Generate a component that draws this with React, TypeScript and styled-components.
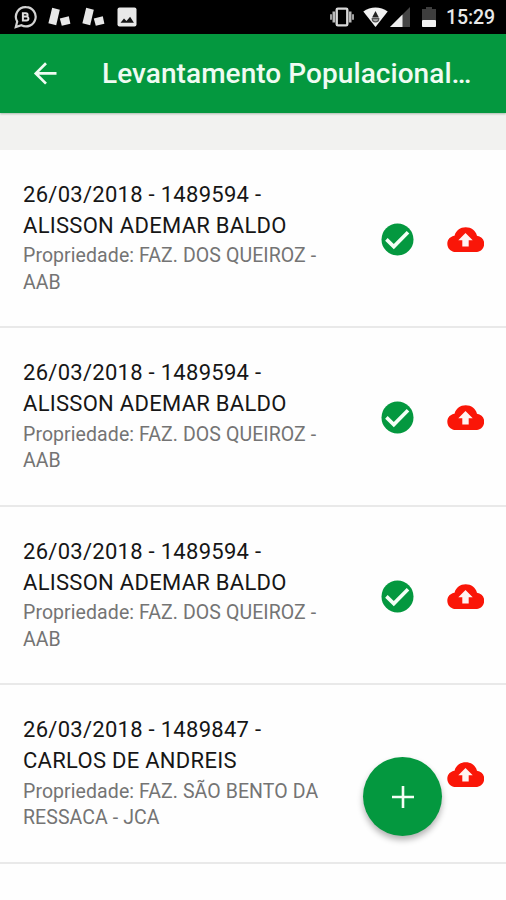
import React from "react";
import styled, { createGlobalStyle } from "styled-components";

const GlobalStyle = createGlobalStyle`
  * { box-sizing: border-box; }
  body { margin: 0; background: #fff; font-family: Roboto, "Liberation Sans", sans-serif; }
`;

const Screen = styled.div`
  position: relative;
  width: 506px;
  height: 900px;
  overflow: hidden;
  background: #fefefe;
  display: flex;
  flex-direction: column;
`;

const StatusBar = styled.div`
  flex: none;
  height: 34px;
  padding: 0 10px 0 14px;
  background: #000;
  display: flex;
  align-items: center;
  justify-content: space-between;
`;

const StatusGroup = styled.div`
  display: flex;
  align-items: center;
  height: 34px;
`;

const StatusIcon = styled.svg<{ $gap?: number }>`
  flex: none;
  display: block;
  margin-right: ${(p) => p.$gap ?? 0}px;
`;

const Clock = styled.span`
  width: 50px;
  color: #e9e9e9;
  font-size: 19.5px;
  line-height: 34px;
  font-weight: 500;
  letter-spacing: -0.1px;
  white-space: nowrap;
  padding-top: 2px;
`;

const AppBar = styled.header`
  flex: none;
  z-index: 1;
  height: 78.5px;
  background: #04983f;
  box-shadow: 0 1px 2px rgba(0, 60, 20, 0.3);
  display: flex;
  align-items: center;
  padding-left: 33px;
`;

const BackButton = styled.button`
  border: 0;
  padding: 0;
  background: none;
  width: 69px;
  height: 24px;
  display: flex;
`;

const Title = styled.h1`
  margin: 1px 0 0;
  color: #effbf2;
  font-size: 28px;
  line-height: 36px;
  font-weight: 500;
  letter-spacing: 0.06px;
  white-space: nowrap;
`;

const Gap = styled.div`
  flex: none;
  height: 37px;
  background: #f2f2f0;
`;

const List = styled.ul`
  list-style: none;
  margin: 0;
  padding: 0;
`;

const Row = styled.li`
  height: 178.6px;
  padding: 29px 22px 0 23px;
  border-bottom: 2.5px solid #e9e9e9;
  display: flex;
  justify-content: space-between;
`;

const RowText = styled.div`
  width: 320px;
`;

const Name = styled.div`
  color: #161616;
  font-size: 22px;
  line-height: 31px;
  letter-spacing: 0.28px;
  white-space: nowrap;
`;

const Property = styled.div`
  margin-top: 2.6px;
  color: #747474;
  font-size: 19.5px;
  line-height: 26.6px;
  letter-spacing: 0.08px;
  white-space: nowrap;
`;

const RowIcons = styled.div`
  height: 121.4px;
  display: flex;
  align-items: center;
  gap: 33px;
`;

const Icon = styled.svg`
  display: block;
  flex: none;
`;

const AddButton = styled.button`
  position: absolute;
  left: 363px;
  top: 757px;
  width: 79px;
  height: 79px;
  border: 0;
  border-radius: 50%;
  padding: 0;
  background: #04983f;
  box-shadow: 0 4px 6px rgba(0, 0, 0, 0.3);
  display: flex;
  align-items: center;
  justify-content: center;
`;

const BusinessChat = () => (
  <StatusIcon width="24" height="24" viewBox="0 0 24 24" $gap={9}>
    <path d="M12.2 2.2a9.6 9.6 0 1 1-4.8 18L1.8 22l1.4-5.4A9.6 9.6 0 0 1 12.2 2.2z" fill="none" stroke="#d2d2d2" strokeWidth="2.2" />
    <path d="M8.9 8.2h3a1.7 1.7 0 0 1 0 3.4h-3zM8.9 11.6h3.6a1.9 1.9 0 0 1 0 3.8H8.9z" fill="none" stroke="#dedede" strokeWidth="2" />
  </StatusIcon>
);

const Blocks = ({ gap }: { gap: number }) => (
  <StatusIcon width="25" height="20" viewBox="0 0 25 20" $gap={gap}>
    <path d="M5.2.8 12.8 2.8 9.2 18.2 1.4 16.2z" fill="#e8e8e8" />
    <path d="m12.8 11.6 9-2.4 1.6 7.6-8.6 2z" fill="#e8e8e8" />
  </StatusIcon>
);

const Picture = () => (
  <StatusIcon width="20" height="20" viewBox="0 0 20 20">
    <rect x=".5" y=".5" width="19" height="19" rx="2" fill="#e8e8e8" />
    <path d="M3.5 15.8 7 11.6l2.5 2.4 3.6-4.2 3.8 6z" fill="#161616" />
  </StatusIcon>
);

const Vibrate = () => (
  <StatusIcon width="27" height="20" viewBox="0 0 27 20" $gap={8}>
    <rect x="8.7" y="1.6" width="10.6" height="16.8" rx="1.2" fill="none" stroke="#d8d8d8" strokeWidth="2.4" />
    <path d="M5.8 4.5v11M22.2 4.5v11" stroke="#bababa" strokeWidth="2.6" />
    <path d="M3 7.2v5.6M25 7.2v5.6" stroke="#a0a0a0" strokeWidth="2" />
  </StatusIcon>
);

const Wifi = () => (
  <StatusIcon width="25" height="20" viewBox="0 0 25 20" $gap={2}>
    <path d="M.3 4.5C7.5-1 17.5-1 24.7 4.5L12.5 20z" fill="#f2f2f2" />
    <path d="m12.5 4 3.4 6.4H9.1z" fill="#222" />
    <path d="M9.2 11.6h6.6a3.3 3.3 0 0 1-6.6 0z" fill="#aaa" stroke="#555" strokeWidth="1.2" />
  </StatusIcon>
);

const Signal = () => (
  <StatusIcon width="20" height="20" viewBox="0 0 20 20" $gap={12}>
    <path d="M0 20 20 0v20z" fill="#454545" />
    <path d="M0 20 12.5 7.5V20z" fill="#eee" />
  </StatusIcon>
);

const Battery = () => (
  <StatusIcon width="14" height="20" viewBox="0 0 14 20" $gap={10}>
    <path d="M0 2h4V0h6v2h4v11H0z" fill="#3e3e3e" />
    <rect y="13" width="14" height="7" rx=".8" fill="#f2f2f2" />
  </StatusIcon>
);

const Check = () => (
  <Icon width="33" height="33" viewBox="0 0 33 33">
    <circle cx="16.5" cy="16.5" r="16" fill="#04983f" />
    <path d="m5.4 16.4 7.4 7.2L27 9.2" fill="none" stroke="#f4fff6" strokeWidth="3.6" />
  </Icon>
);

const CloudUpload = () => (
  <Icon width="37.5" height="25.4" viewBox="0 0 37.5 25.4">
    <path
      d="M18.7.3C24.3.3 28.6 3.5 30 8.8c4.2.5 7.2 3.6 7.2 7.8 0 4.9-3.7 8.5-8.6 8.5H9C4.1 25.1.3 21.5.3 16.7c0-4.2 3-7.3 7.2-7.9C9 3.5 13.2.3 18.7.3z"
      fill="#fa1608"
    />
    <path d="m18.5 5.9 7.2 7.4h-4v6.2h-6.4v-6.2h-4z" fill="#fff4f2" />
  </Icon>
);

const entries = [
  { first: "26/03/2018 - 1489594 -", second: "ALISSON ADEMAR BALDO", property: ["Propriedade: FAZ. DOS QUEIROZ -", "AAB"], done: true },
  { first: "26/03/2018 - 1489594 -", second: "ALISSON ADEMAR BALDO", property: ["Propriedade: FAZ. DOS QUEIROZ -", "AAB"], done: true },
  { first: "26/03/2018 - 1489594 -", second: "ALISSON ADEMAR BALDO", property: ["Propriedade: FAZ. DOS QUEIROZ -", "AAB"], done: true },
  { first: "26/03/2018 - 1489847 -", second: "CARLOS DE ANDREIS", property: ["Propriedade: FAZ. SÃO BENTO DA", "RESSACA - JCA"], done: false },
];

export default function App() {
  return (
    <Screen>
      <GlobalStyle />
      <StatusBar>
        <StatusGroup>
          <BusinessChat />
          <Blocks gap={9} />
          <Blocks gap={11} />
          <Picture />
        </StatusGroup>
        <StatusGroup>
          <Vibrate />
          <Wifi />
          <Signal />
          <Battery />
          <Clock>15:29</Clock>
        </StatusGroup>
      </StatusBar>
      <AppBar>
        <BackButton aria-label="Voltar">
          <Icon width="24" height="24" viewBox="0 0 24 24">
            <path d="M23.5 12.4H3M13 2.2 2.8 12.4 13 22.6" fill="none" stroke="#effbf2" strokeWidth="2.7" />
          </Icon>
        </BackButton>
        <Title>Levantamento Populacional…</Title>
      </AppBar>
      <Gap />
      <List>
        {entries.map((e, i) => (
          <Row key={i}>
            <RowText>
              <Name>{e.first}</Name>
              <Name>{e.second}</Name>
              <Property>
                {e.property[0]}
                <br />
                {e.property[1]}
              </Property>
            </RowText>
            <RowIcons>
              {e.done && <Check />}
              <CloudUpload />
            </RowIcons>
          </Row>
        ))}
      </List>
      <AddButton aria-label="Adicionar">
        <Icon width="22" height="22" viewBox="0 0 22 22">
          <path d="M11 0v22M0 11h22" stroke="#f4fff6" strokeWidth="2.6" />
        </Icon>
      </AddButton>
    </Screen>
  );
}
